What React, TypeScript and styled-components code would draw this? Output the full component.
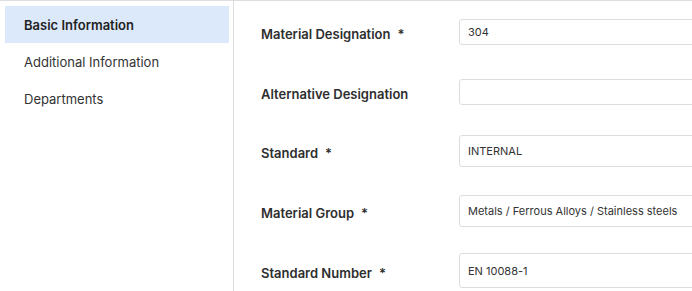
import React from 'react';
import styled, { createGlobalStyle } from 'styled-components';

const GlobalStyle = createGlobalStyle`
    html, body {
        margin: 0;
        padding: 0;
        background: #ffffff;
    }
    body {
        font-family: Inter, 'Noto Sans', sans-serif;
        color: #2b2b2b;
        overflow: hidden;
    }
`;

const Page = styled.div`
    display: flex;
    width: 692px;
    height: 291px;
    border-top: 1px solid #dedede;
    box-sizing: border-box;
    overflow: hidden;
`;

const Sidebar = styled.nav`
    flex: 0 0 234px;
    box-sizing: border-box;
    padding: 5px 4px 0 5px;
    border-right: 1px solid #dedede;
    display: flex;
    flex-direction: column;
`;

const NavItem = styled.div<{ $active?: boolean }>`
    height: 37px;
    flex-shrink: 0;
    display: flex;
    align-items: center;
    padding-left: 19px;
    font-size: 13px;
    font-weight: ${({ $active }) => ($active ? 600 : 400)};
    color: ${({ $active }) => ($active ? '#1f1f1f' : '#333333')};
    background: ${({ $active }) => ($active ? '#dce9fb' : 'transparent')};
    cursor: pointer;
`;

const Form = styled.div`
    flex: 1;
    padding: 1px 0 0 27px;
    display: flex;
    flex-direction: column;
`;

const FieldRow = styled.div`
    height: 59.7px;
    flex-shrink: 0;
    display: flex;
    align-items: center;
`;

const Label = styled.label`
    flex: 0 0 198px;
    padding-top: 4px;
    font-size: 13px;
    font-weight: 600;
    color: #2e2e2e;
    white-space: nowrap;
`;

const Required = styled.span`
    margin-left: 7px;
`;

const Input = styled.input<{ $height: number }>`
    width: 280px;
    height: ${({ $height }) => $height}px;
    box-sizing: border-box;
    flex-shrink: 0;
    padding: 0 8px;
    border: 1px solid #dddddd;
    border-radius: 3px;
    font-family: inherit;
    font-size: 11px;
    color: #333333;
    background: #ffffff;
    outline: none;
`;

const fields = [
    { label: 'Material Designation', required: true, value: '304', height: 26 },
    { label: 'Alternative Designation', required: false, value: '', height: 26 },
    { label: 'Standard', required: true, value: 'INTERNAL', height: 32 },
    { label: 'Material Group', required: true, value: 'Metals / Ferrous Alloys / Stainless steels', height: 32 },
    { label: 'Standard Number', required: true, value: 'EN 10088-1', height: 35 },
];

const App = () => {
    return (
        <>
            <GlobalStyle />
            <Page>
                <Sidebar>
                    <NavItem $active>Basic Information</NavItem>
                    <NavItem>Additional Information</NavItem>
                    <NavItem>Departments</NavItem>
                </Sidebar>
                <Form>
                    {fields.map((field) => (
                        <FieldRow key={field.label}>
                            <Label>
                                {field.label}
                                {field.required && <Required>*</Required>}
                            </Label>
                            <Input $height={field.height} defaultValue={field.value} readOnly />
                        </FieldRow>
                    ))}
                </Form>
            </Page>
        </>
    );
};

export default App;
